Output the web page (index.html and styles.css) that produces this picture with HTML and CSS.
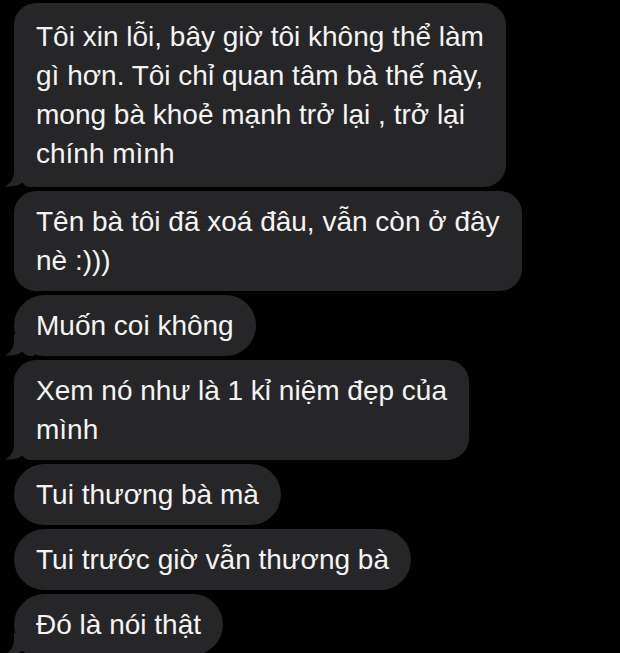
FILE: index.html
```html
<!DOCTYPE html>
<html lang="vi">
<head>
  <meta charset="UTF-8" />
  <meta name="viewport" content="width=device-width, initial-scale=1.0"/>
  <title>Tin nhắn</title>
  <link rel="stylesheet" href="styles.css">
</head>
<body>
  <div class="thread">
    <div class="bubble tail tall">
      Tôi xin lỗi, bây giờ tôi không thể làm<br>
      gì hơn. Tôi chỉ quan tâm bà thế này,<br>
      mong bà khoẻ mạnh trở lại , trở lại<br>
      chính mình
      <svg class="tail-mark" viewBox="0 0 30 22" width="30" height="22"><rect x="10" y="0" width="20" height="22" fill="#000"/><path d="M10 0 H30 V22 H27 C23 22 20 20 18.5 17.5 C15 20.5 9 22 1 21.5 C6 18.5 10 14 10 6 Z" fill="#262628"/></svg>
    </div>

    <div class="bubble">
      Tên bà tôi đã xoá đâu, vẫn còn ở đây<br>
      nè :)))
    </div>

    <div class="bubble single tail">
      Muốn coi không
      <svg class="tail-mark" viewBox="0 0 30 22" width="30" height="22"><rect x="10" y="0" width="20" height="22" fill="#000"/><path d="M10 0 H30 V22 H27 C23 22 20 20 18.5 17.5 C15 20.5 9 22 1 21.5 C6 18.5 10 14 10 6 Z" fill="#262628"/></svg>
    </div>

    <div class="bubble tail">
      Xem nó như là 1 kỉ niệm đẹp của<br>
      mình
      <svg class="tail-mark" viewBox="0 0 30 22" width="30" height="22"><rect x="10" y="0" width="20" height="22" fill="#000"/><path d="M10 0 H30 V22 H27 C23 22 20 20 18.5 17.5 C15 20.5 9 22 1 21.5 C6 18.5 10 14 10 6 Z" fill="#262628"/></svg>
    </div>

    <div class="bubble single">Tui thương bà mà</div>

    <div class="bubble single">Tui trước giờ vẫn thương bà</div>

    <div class="bubble single tail">
      Đó là nói thật
      <svg class="tail-mark" viewBox="0 0 30 22" width="30" height="22"><rect x="10" y="0" width="20" height="22" fill="#000"/><path d="M10 0 H30 V22 H27 C23 22 20 20 18.5 17.5 C15 20.5 9 22 1 21.5 C6 18.5 10 14 10 6 Z" fill="#262628"/></svg>
    </div>
  </div>
</body>
</html>
```

FILE: styles.css
```css
body {
  margin: 0;
  padding: 0;
  background: #000;
  font-family: 'Liberation Sans', Arial, sans-serif;
  color: #f4f4f4;
}

.thread {
  display: flex;
  flex-direction: column;
  align-items: flex-start;
  gap: 4px;
  padding: 3px 0 0 14px;
}

.bubble {
  position: relative;
  background: #262628;
  border-radius: 22px;
  padding: 11px 22px;
  font-size: 28px;
  line-height: 39px;
  white-space: nowrap;
}

.bubble.single {
  border-radius: 31px;
}

.bubble.tall {
  padding-top: 14px;
  padding-bottom: 14px;
}

.tail-mark {
  position: absolute;
  left: -10px;
  bottom: 0;
  display: block;
}
```
